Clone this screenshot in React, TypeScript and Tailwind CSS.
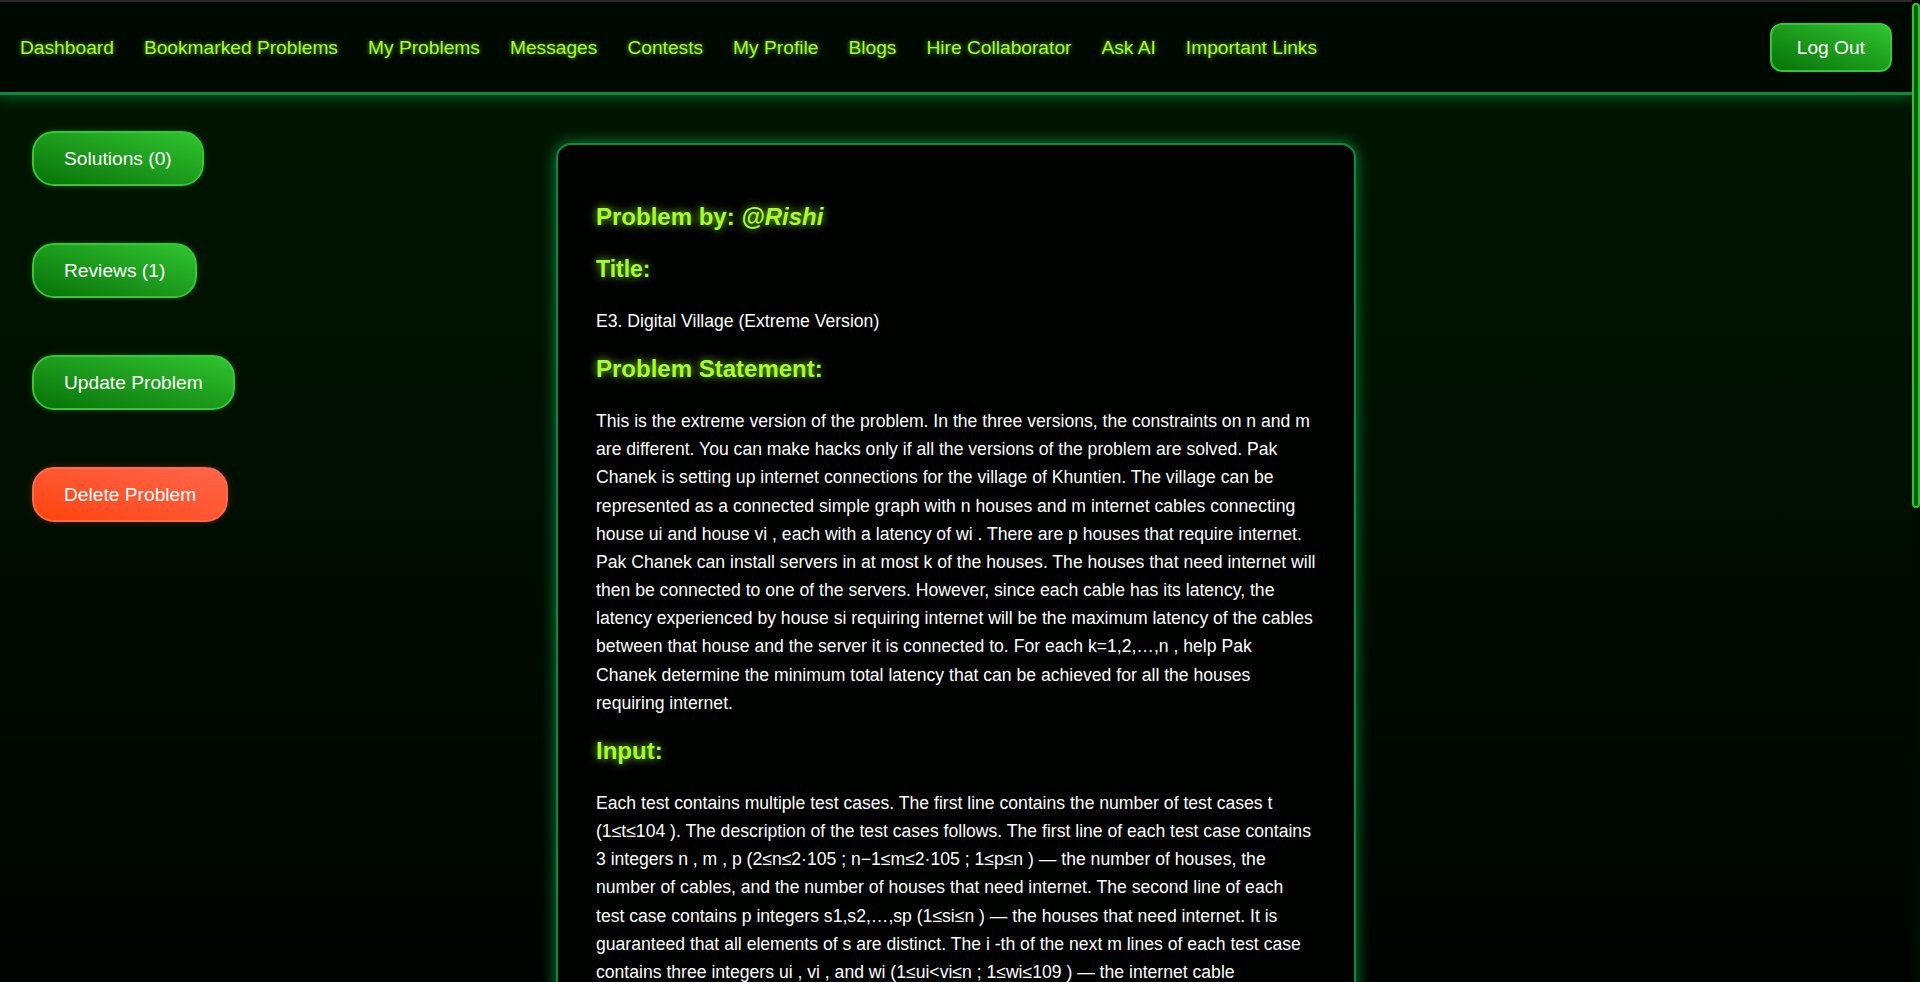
import React from "react";

const navLinks = [
  "Dashboard",
  "Bookmarked Problems",
  "My Problems",
  "Messages",
  "Contests",
  "My Profile",
  "Blogs",
  "Hire Collaborator",
  "Ask AI",
  "Important Links",
];

function Heading({ children, small }: { children: React.ReactNode; small?: boolean }) {
  return (
    <h2
      className={
        (small ? "text-[23px] " : "text-[24px] ") +
        "font-bold leading-[28px] mt-[20px] mb-[24px] text-[#a4ff2c] [text-shadow:0_0_8px_rgba(164,255,44,0.85)]"
      }
    >
      {children}
    </h2>
  );
}

function Para({ children }: { children: React.ReactNode }) {
  return <p className="text-[17.6px] leading-[28.16px] text-white m-0">{children}</p>;
}

const greenBtn =
  "rounded-[22px] border-2 border-[#34c934] bg-gradient-to-tr from-[#067306] to-[#30c530] text-white text-[19.2px] leading-[23px] px-[30px] py-[14px] shadow-[0_0_6px_rgba(50,205,50,0.3)]";

export default function App() {
  return (
    <div className="h-screen flex bg-gradient-to-b from-[#001600] via-[#000f00] to-[#000400] font-['Liberation_Sans',Arial,sans-serif]">
      <div className="flex-1 min-w-0 overflow-hidden">
        <nav className="h-[95px] box-border border-t-2 border-t-[#2b2b2b] border-b-[3px] border-b-[#0b8a3c] bg-[#000900] shadow-[0_4px_12px_rgba(11,138,60,0.55)] flex items-center justify-between px-[20px] relative z-10">
          <div className="flex items-center gap-[30px]">
            {navLinks.map((l) => (
              <a
                key={l}
                className="text-[19.2px] leading-[23px] text-[#a4ff2c] [text-shadow:0_0_5px_rgba(164,255,44,0.7)] whitespace-nowrap cursor-pointer"
              >
                {l}
              </a>
            ))}
          </div>
          <button className="rounded-[12px] border-2 border-[#34c934] bg-gradient-to-tr from-[#067306] to-[#30c530] text-white text-[19.2px] leading-[21px] px-[25px] py-[12px]">
            Log Out
          </button>
        </nav>

        <div className="grid grid-cols-[1fr_800px_1fr] items-start">
          <div className="pt-[36px] pl-[32px] flex flex-col items-start gap-[57px]">
            <button className={greenBtn}>Solutions (0)</button>
            <button className={greenBtn}>Reviews (1)</button>
            <button className={greenBtn}>Update Problem</button>
            <button className="rounded-[22px] border-2 border-[#ff6a48] bg-gradient-to-tr from-[#ff4300] to-[#ff6548] text-white text-[19.2px] leading-[23px] px-[30px] py-[14px] shadow-[0_0_6px_rgba(255,99,71,0.3)]">
              Delete Problem
            </button>
          </div>

          <div className="pt-[48px] pb-[60px]">
            <div className="w-[800px] box-border border-2 border-[#0b8a3c] rounded-[15px] bg-[#000200] p-[38px] shadow-[0_0_15px_#0b8a3c]">
              <Heading>
                Problem by: <em>@Rishi</em>
              </Heading>
              <Heading small>Title:</Heading>
              <Para>E3. Digital Village (Extreme Version)</Para>
              <Heading>Problem Statement:</Heading>
              <Para>
                This is the extreme version of the problem. In the three versions, the constraints on n and m are
                different. You can make hacks only if all the versions of the problem are solved. Pak Chanek is setting
                up internet connections for the village of Khuntien. The village can be represented as a connected
                simple graph with n houses and m internet cables connecting house ui and house vi , each with a latency
                of wi . There are p houses that require internet. Pak Chanek can install servers in at most k of the
                houses. The houses that need internet will then be connected to one of the servers. However, since each
                cable has its latency, the latency experienced by house si requiring internet will be the maximum
                latency of the cables between that house and the server it is connected to. For each k=1,2,…,n , help
                Pak Chanek determine the minimum total latency that can be achieved for all the houses requiring
                internet.
              </Para>
              <Heading>Input:</Heading>
              <Para>
                Each test contains multiple test cases. The first line contains the number of test cases t (1≤t≤104 ).
                The description of the test cases follows. The first line of each test case contains 3 integers n , m ,
                p (2≤n≤2·105 ; n−1≤m≤2·105 ; 1≤p≤n ) — the number of houses, the number of cables, and the number of
                houses that need internet. The second line of each test case contains p integers s1,s2,…,sp (1≤si≤n )
                — the houses that need internet. It is guaranteed that all elements of s are distinct. The i -th of the
                next m lines of each test case contains three integers ui , vi , and wi (1≤ui&lt;vi≤n ; 1≤wi≤109 ) —
                the internet cable connecting house ui and house vi with latency of wi . It is guaranteed that the given
                edges form a connected simple graph. It is guaranteed that the sum of n and the sum of m do not exceed
                2·105 .
              </Para>
              <Heading>Output:</Heading>
              <Para>
                For each test case, output n integers: the minimum total latency that can be achieved for all the
                houses requiring internet for each k=1,2,…,n .
              </Para>
              <Heading>Sample Input:</Heading>
              <Para>2</Para>
              <Para>9 8 5</Para>
              <Para>2 5 6 8 9</Para>
              <Para>1 2 1</Para>
              <Para>1 3 2</Para>
              <Para>3 4 10</Para>
              <Para>4 5 3</Para>
              <Para>4 6 5</Para>
              <Para>1 7 10</Para>
              <Para>7 8 4</Para>
              <Para>7 9 2</Para>
              <Para>3 3 2</Para>
              <Para>3 1</Para>
              <Para>1 2 1</Para>
              <Para>2 3 3</Para>
              <Para>1 3 2</Para>
              <Heading>Sample Output:</Heading>
              <Para>34 19 9 4 0 0 0 0 0</Para>
              <Para>2 0 0</Para>
            </div>
          </div>
          <div />
        </div>
      </div>

      <div className="w-[8px] shrink-0 bg-[#000b00]">
        <div className="mt-[3px] h-[505px] w-[8px] box-border rounded-[4px] border-2 border-[#2fc42f] bg-[#0b5e0b]" />
      </div>
    </div>
  );
}
